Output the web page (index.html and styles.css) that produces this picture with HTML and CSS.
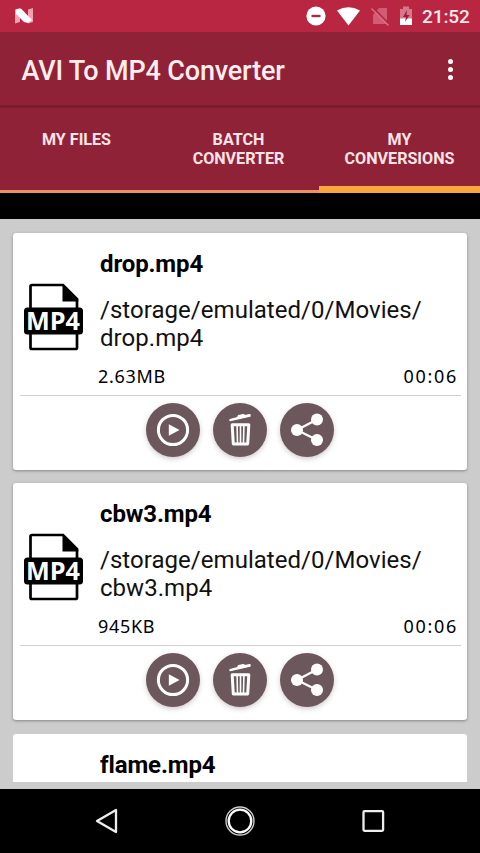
FILE: index.html
```html
<!DOCTYPE html>
<html lang="en">
<head>
<meta charset="utf-8">
<title>AVI To MP4 Converter</title>
<link rel="stylesheet" href="styles.css">
</head>
<body>
<svg class="sprite" aria-hidden="true">
  <symbol id="file" viewBox="0 0 60 68">
    <path d="M6.500 26V3.500Q6.500 2 8 2H39L53 16V26M6.500 48V64.500Q6.500 66 8 66H51.500Q53 66 53 64.500V48" fill="none" stroke="#000" stroke-width="2.700"/>
    <path d="M38.500 1L54.300 16.500V18.500H38.500Z"/>
    <rect x="0" y="24.500" width="59" height="27" rx="3.500"/>
    <text x="29" y="47" class="file-label" textLength="54" lengthAdjust="spacingAndGlyphs">MP4</text>
  </symbol>
  <symbol id="play" viewBox="0 0 54 54">
    <circle cx="27" cy="27" r="14.600" fill="none" stroke="#fff" stroke-width="3"/>
    <path d="M22.800 21.200L33.600 27L22.800 32.800Z" fill="#fff"/>
  </symbol>
  <symbol id="trash" viewBox="0 0 54 54">
    <path d="M17 16.500L24.500 14.500L25.500 12.500L30.500 11.500L31.500 12.700L37 11.500V13.200L17 17.700Z" fill="#fff" stroke="#fff" stroke-width="1.200" stroke-linejoin="round"/>
    <path d="M19.200 21.800H35.800L34.700 41H20.300Z" fill="none" stroke="#fff" stroke-width="3" stroke-linejoin="round"/>
    <path d="M24.100 22.500L24.500 40M27.500 22.500V40M30.900 22.500L30.500 40" stroke="#fff" stroke-width="1.600"/>
  </symbol>
  <symbol id="share" viewBox="0 0 54 54">
    <path d="M37 16.500L17 27L37 37" fill="none" stroke="#fff" stroke-width="2.300"/>
    <circle cx="37" cy="16.500" r="6" fill="#fff"/><circle cx="17" cy="27" r="6" fill="#fff"/><circle cx="37" cy="37" r="6" fill="#fff"/>
  </symbol>
</svg>
<div class="screen">
  <div class="status">
    <svg class="logo" viewBox="0 0 20 16"><path d="M1 1.500L6 0V14L1 15.500ZM14 1.500L19 0V14L14 15.500Z" fill="#f0a0ae"/><path d="M2 1.500L7 .5L18 12L14 15L10 14L2 6Z" fill="#fff"/></svg>
    <svg class="indicators" viewBox="0 0 110 24">
      <circle cx="10" cy="12" r="9.600" fill="#fff"/><path d="M5.500 12H14.500" stroke="#a03044" stroke-width="2.400"/>
      <path d="M31 6Q42.500-.5 54 6L42.500 21Z" fill="#fff" transform="translate(0 .5)"/>
      <path d="M67 11L73 4H81V20H67Z" fill="#d35c75"/><path d="M67 4L83.500 20.500" stroke="#b92642" stroke-width="2"/><path d="M65.500 4.500L82.500 21.500" stroke="#da6f84" stroke-width="1.500"/>
      <path d="M94 5H97V2.500H103V5H106V21H94Z" fill="#d7788a"/><path d="M94 14.500H106V21H94Z" fill="#fff"/><path d="M101 6L97 13H100L99 18L103.500 11H100.500Z" fill="#922139"/>
    </svg>
    <span class="clock">21:52</span>
  </div>
  <header class="toolbar">
    <h1>AVI To MP4 Converter</h1>
    <div class="more"><i></i><i></i><i></i></div>
  </header>
  <nav class="tabs">
    <div class="tab"><span>MY FILES</span></div>
    <div class="tab"><span>BATCH<br>CONVERTER</span></div>
    <div class="tab active"><span>MY<br>CONVERSIONS</span></div>
  </nav>
  <div class="banner"></div>
  <main class="list">
    <article class="card">
      <h2>drop.mp4</h2>
      <div class="body"><svg class="file"><use href="#file"/></svg><p>/storage/emulated/0/Movies/<br>drop.mp4</p></div>
      <div class="meta"><span class="size">2.63MB</span><span class="time">00:06</span></div>
      <div class="actions"><svg><use href="#play"/></svg><svg><use href="#trash"/></svg><svg><use href="#share"/></svg></div>
    </article>
    <article class="card">
      <h2>cbw3.mp4</h2>
      <div class="body"><svg class="file"><use href="#file"/></svg><p>/storage/emulated/0/Movies/<br>cbw3.mp4</p></div>
      <div class="meta"><span class="size">945KB</span><span class="time">00:06</span></div>
      <div class="actions"><svg><use href="#play"/></svg><svg><use href="#trash"/></svg><svg><use href="#share"/></svg></div>
    </article>
    <article class="card partial">
      <h2>flame.mp4</h2>
    </article>
  </main>
  <footer class="navbar">
    <svg viewBox="0 0 30 30"><path d="M5 15L24 4V26Z" fill="none" stroke="#eee" stroke-width="2.300" stroke-linejoin="round"/></svg>
    <svg viewBox="0 0 30 30"><circle cx="15" cy="15" r="14" fill="none" stroke="#ccc" stroke-width="1.400"/><circle cx="15" cy="15" r="11.300" fill="none" stroke="#fff" stroke-width="2.300"/></svg>
    <svg viewBox="0 0 30 30"><rect x="5.500" y="5.200" width="19.600" height="19.600" rx="1" fill="none" stroke="#eee" stroke-width="2.300"/></svg>
  </footer>
</div>
</body>
</html>
```

FILE: styles.css
```css
* { box-sizing: border-box; }
body { margin: 0; font-family: Roboto, sans-serif; background: #000; }
h1, h2, p { margin: 0; }
svg { display: block; flex: none; }
.sprite { display: none; }
.screen { width: 480px; height: 853px; display: flex; flex-direction: column; overflow: hidden; }
.status { height: 32px; flex: none; background: #b92642; display: flex; align-items: center; padding: 0 10px 0 14px; }
.logo { width: 20px; height: 16px; }
.indicators { width: 110px; height: 24px; margin-left: auto; margin-top: -1px; }
.clock { width: 48px; margin-left: 6px; font-size: 19px; font-weight: 500; line-height: 32px; color: #ffe9ed; white-space: nowrap; padding-top: 2px; letter-spacing: -.1px; }
.toolbar { height: 76px; flex: none; background: #8f2236; border-bottom: 3px solid #7e1b2d; display: flex; align-items: center; justify-content: space-between; padding: 4px 27px 0 21.500px; }
h1 { font-size: 27px; font-weight: 500; line-height: 32px; letter-spacing: -.16px; color: #ffedf0; white-space: nowrap; }
.more { display: flex; flex-direction: column; gap: 2.500px; margin-top: -2px; }
.more i { width: 5.500px; height: 5.500px; border-radius: 50%; background: #fff; }
.tabs { height: 85px; flex: none; background: #8f2236; display: grid; grid-template-columns: 158px 161px 161px; }
.tab { border-bottom: 3px solid #eb9360; text-align: center; padding-top: 22px; font-size: 16.100px; font-weight: 700; line-height: 19px; color: #ffe4e9; }
.tab:first-child { padding-right: 5px; }
.tab.active { border-bottom: 7px solid #f9a63f; }
.banner { height: 26px; flex: none; background: #000; }
.list { height: 570px; flex: none; background: #ccc; padding: 14px 13px 7px; display: flex; flex-direction: column; gap: 13px; overflow: hidden; }
.card { height: 237px; flex: none; background: #fff; border-radius: 3px; box-shadow: 0 1px 3px rgba(0,0,0,.35); padding: 17px 6px 0 7px; }
.partial { height: 48px; margin-top: 1px; border-radius: 3px 3px 0 0; box-shadow: none; }
h2 { margin-left: 80px; font-size: 24px; font-weight: 700; line-height: 28px; letter-spacing: -.12px; color: #000; }
.body { display: flex; height: 79px; }
.file { width: 60px; height: 68px; margin: 5px 16px 0 4px; }
.file-label { font: 700 25px "Open Sans", sans-serif; fill: #fff; text-anchor: middle; }
.body p { font-size: 24px; line-height: 28px; letter-spacing: .04px; color: #111; padding-top: 18px; white-space: nowrap; }
.meta { height: 39px; display: flex; justify-content: space-between; border-bottom: 1.500px solid #d0d0d0; padding: 7px 3px 0 78px; font: 18px/24px "Noto Sans", sans-serif; color: #000; }
.size { letter-spacing: .7px; }
.time { letter-spacing: 1.700px; }
.actions { display: flex; justify-content: center; gap: 13px; padding: 7px 1px 0 0; margin-left: -1px; }
.actions svg { width: 54px; height: 54px; border-radius: 50%; background: #6b575c; box-shadow: 0 2px 5px rgba(80,50,60,.25); }
.navbar { height: 64px; flex: none; background: #000; display: flex; justify-content: center; align-items: center; gap: 103px; }
.navbar svg { width: 30px; height: 30px; }
```
